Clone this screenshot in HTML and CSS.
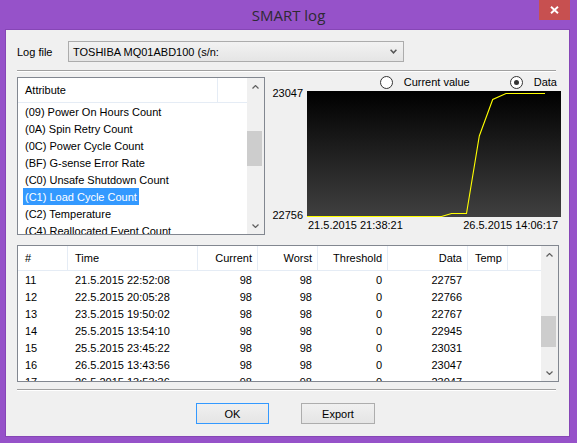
FILE: index.html
```html
<!DOCTYPE html>
<html>
<head>
<meta charset="utf-8">
<title>SMART log</title>
<link rel="stylesheet" href="styles.css">
</head>
<body>
<div class="window">
  <div class="titlebar">
    <div class="title">SMART log</div>
    <div class="close">
      <svg width="9" height="8" viewBox="0 0 9 8"><path d="M1 0.8 L8 7.2 M8 0.8 L1 7.2" stroke="#fff" stroke-width="1.9" fill="none"/></svg>
    </div>
  </div>
  <div class="client">
    <div class="logrow">
      <div class="loglabel">Log file</div>
      <div class="combo">
        <span>TOSHIBA MQ01ABD100 (s/n:</span>
        <svg width="7" height="5" viewBox="0 0 7 5"><path d="M0.6 0.8 L3.5 3.8 L6.4 0.8" fill="none" stroke="#555" stroke-width="1.5"/></svg>
      </div>
    </div>
    <div class="sep"></div>
    <div class="middle">
      <div class="listbox attr">
        <div class="lv-body">
          <div class="lv-head">
            <div class="hcol c-attr">Attribute</div>
          </div>
          <div class="row"><span class="item">(09) Power On Hours Count</span></div>
          <div class="row"><span class="item">(0A) Spin Retry Count</span></div>
          <div class="row"><span class="item">(0C) Power Cycle Count</span></div>
          <div class="row"><span class="item">(BF) G-sense Error Rate</span></div>
          <div class="row"><span class="item">(C0) Unsafe Shutdown Count</span></div>
          <div class="row"><span class="item selected">(C1) Load Cycle Count</span></div>
          <div class="row"><span class="item">(C2) Temperature</span></div>
          <div class="row"><span class="item">(C4) Reallocated Event Count</span></div>
        </div>
        <div class="vscroll">
          <div class="sb-btn"><svg width="7" height="4" viewBox="0 0 7 4"><path d="M0.5 3.5 L3.5 0.6 L6.5 3.5" fill="none" stroke="#606060" stroke-width="1.3"/></svg></div>
          <div class="sb-track"><div class="sb-thumb attr-thumb"></div></div>
          <div class="sb-btn"><svg width="7" height="4" viewBox="0 0 7 4"><path d="M0.5 0.5 L3.5 3.4 L6.5 0.5" fill="none" stroke="#606060" stroke-width="1.3"/></svg></div>
        </div>
      </div>
      <div class="panel">
        <div class="radios">
          <div class="radio"><span class="rcircle"></span><span>Current value</span></div>
          <div class="radio"><span class="rcircle checked"></span><span>Data</span></div>
        </div>
        <div class="plot">
          <div class="ylabel ytop">23047</div>
          <div class="ylabel ybot">22756</div>
          <div class="chart">
            <svg width="254" height="126" viewBox="0 0 254 126">
              <polyline points="0,125.5 134.5,125.5 144.5,122.5 159.5,122.5 172.3,45 185.7,8.5 199,2.5 238,2.5" fill="none" stroke="#ffff00" stroke-width="1.1"/>
            </svg>
          </div>
          <div class="xlabels"><span>21.5.2015 21:38:21</span><span>26.5.2015 14:06:17</span></div>
        </div>
      </div>
    </div>
    <div class="listbox table">
      <div class="lv-body">
        <div class="lv-head">
          <div class="hcol w-num">#</div>
          <div class="hcol w-time">Time</div>
          <div class="hcol w-cur r">Current</div>
          <div class="hcol w-worst r">Worst</div>
          <div class="hcol w-thr r">Threshold</div>
          <div class="hcol w-data r">Data</div>
          <div class="hcol w-temp">Temp</div>
        </div>
        <div class="trow"><span class="cell w-num">11</span><span class="cell w-time">21.5.2015 22:52:08</span><span class="cell w-cur r">98</span><span class="cell w-worst r">98</span><span class="cell w-thr r">0</span><span class="cell w-data r">22757</span><span class="cell w-temp"></span></div>
        <div class="trow"><span class="cell w-num">12</span><span class="cell w-time">22.5.2015 20:05:28</span><span class="cell w-cur r">98</span><span class="cell w-worst r">98</span><span class="cell w-thr r">0</span><span class="cell w-data r">22766</span><span class="cell w-temp"></span></div>
        <div class="trow"><span class="cell w-num">13</span><span class="cell w-time">23.5.2015 19:50:02</span><span class="cell w-cur r">98</span><span class="cell w-worst r">98</span><span class="cell w-thr r">0</span><span class="cell w-data r">22767</span><span class="cell w-temp"></span></div>
        <div class="trow"><span class="cell w-num">14</span><span class="cell w-time">25.5.2015 13:54:10</span><span class="cell w-cur r">98</span><span class="cell w-worst r">98</span><span class="cell w-thr r">0</span><span class="cell w-data r">22945</span><span class="cell w-temp"></span></div>
        <div class="trow"><span class="cell w-num">15</span><span class="cell w-time">25.5.2015 23:45:22</span><span class="cell w-cur r">98</span><span class="cell w-worst r">98</span><span class="cell w-thr r">0</span><span class="cell w-data r">23031</span><span class="cell w-temp"></span></div>
        <div class="trow"><span class="cell w-num">16</span><span class="cell w-time">26.5.2015 13:43:56</span><span class="cell w-cur r">98</span><span class="cell w-worst r">98</span><span class="cell w-thr r">0</span><span class="cell w-data r">23047</span><span class="cell w-temp"></span></div>
        <div class="trow"><span class="cell w-num">17</span><span class="cell w-time">26.5.2015 13:53:36</span><span class="cell w-cur r">98</span><span class="cell w-worst r">98</span><span class="cell w-thr r">0</span><span class="cell w-data r">23047</span><span class="cell w-temp"></span></div>
      </div>
      <div class="vscroll">
        <div class="sb-btn"><svg width="7" height="4" viewBox="0 0 7 4"><path d="M0.5 3.5 L3.5 0.6 L6.5 3.5" fill="none" stroke="#606060" stroke-width="1.3"/></svg></div>
        <div class="sb-track"><div class="sb-thumb table-thumb"></div></div>
        <div class="sb-btn"><svg width="7" height="4" viewBox="0 0 7 4"><path d="M0.5 0.5 L3.5 3.4 L6.5 0.5" fill="none" stroke="#606060" stroke-width="1.3"/></svg></div>
      </div>
    </div>
    <div class="sep sep2"></div>
    <div class="buttons">
      <div class="btn default">OK</div>
      <div class="btn">Export</div>
    </div>
  </div>
</div>
</body>
</html>
```

FILE: styles.css
```css
* { box-sizing: border-box; }

body {
  margin: 0;
  background: #9652c9;
  font-family: "Liberation Sans", Arial, sans-serif;
  font-size: 11px;
  color: #000;
}

.window {
  width: 577px;
  height: 443px;
  display: flex;
  flex-direction: column;
}

.titlebar {
  height: 30px;
  display: grid;
  grid-template-columns: 1fr auto 1fr;
  align-items: start;
}

.title {
  grid-column: 2;
  font-family: "Open Sans", "Noto Sans", sans-serif;
  font-size: 15px;
  line-height: 30px;
  color: #2e2a33;
}

.close {
  grid-column: 3;
  justify-self: end;
  width: 31px;
  height: 20px;
  margin-right: 7px;
  background: #c75050;
  display: flex;
  align-items: center;
  justify-content: center;
}

.close svg { display: block; }

.client {
  margin: 0 8px 7px 6px;
  height: 406px;
  background: #f0f0f0;
  padding: 11px 0 0 11px;
  display: flex;
  flex-direction: column;
  box-shadow: 0 0 0 1px #8646b6;
}

.logrow {
  display: flex;
  align-items: center;
  height: 21px;
}

.loglabel { width: 51px; }

.combo {
  width: 336px;
  height: 21px;
  border: 1px solid #acacac;
  background: linear-gradient(#f2f2f2, #e5e5e5);
  display: flex;
  align-items: center;
  justify-content: space-between;
  padding: 0 6px 0 4px;
}

.combo svg { display: block; }

.sep {
  width: 539px;
  height: 2px;
  border-top: 1px solid #a0a0a0;
  border-bottom: 1px solid #ffffff;
  margin-top: 8px;
}

.middle {
  display: flex;
  height: 158px;
  margin-top: 5px;
}

.listbox {
  border: 1px solid #828790;
  background: #fff;
  display: flex;
}

.listbox.attr {
  width: 248px;
  height: 158px;
}

.lv-body {
  flex: 1;
  min-width: 0;
  overflow: hidden;
}

.lv-head {
  height: 25px;
  border-bottom: 1px solid #e5ecf5;
  display: flex;
}

.hcol {
  height: 24px;
  line-height: 24px;
  border-right: 1px solid #e5ecf5;
  padding: 0 5px 0 7px;
  white-space: nowrap;
  flex: none;
}

.c-attr { width: 200px; }

.row {
  height: 17px;
  padding-top: 1px;
  line-height: 16px;
  white-space: nowrap;
}

.item {
  display: inline-block;
  margin-left: 5px;
  padding: 0 2px;
  margin-top: -1px;
  height: 17px;
  line-height: 18px;
  vertical-align: top;
}

.item.selected {
  background: #3399ff;
  color: #fff;
}

.vscroll {
  width: 17px;
  flex: none;
  background: #f0f0f0;
  display: flex;
  flex-direction: column;
}

.sb-btn {
  height: 17px;
  display: flex;
  align-items: center;
  justify-content: center;
  flex: none;
}

.sb-btn svg { display: block; }

.sb-track { flex: 1; }

.sb-thumb {
  margin: 0 2px 0 0;
  background: #cdcdcd;
}

.attr-thumb { margin-top: 36px; height: 35px; }
.table-thumb { margin-top: 53px; height: 31px; }

.panel {
  width: 291px;
  margin-left: 5px;
  display: flex;
  flex-direction: column;
}

.radios {
  height: 10px;
  display: flex;
  justify-content: flex-end;
  align-items: center;
  padding-right: 4px;
}

.radio {
  display: flex;
  align-items: center;
  gap: 11px;
}

.radio + .radio { margin-left: 40px; }

.rcircle {
  width: 13px;
  height: 13px;
  border: 1px solid #333;
  border-radius: 50%;
  background: #fff;
  flex: none;
  display: flex;
  align-items: center;
  justify-content: center;
}

.rcircle.checked::after {
  content: "";
  width: 5px;
  height: 5px;
  border-radius: 50%;
  background: #333;
}

.plot {
  display: grid;
  grid-template-columns: 37px 254px;
  grid-template-rows: 126px 13px;
  margin-top: 4px;
}

.ylabel {
  grid-column: 1;
  grid-row: 1;
  text-align: right;
  padding-right: 4px;
  line-height: 13px;
}

.ytop { align-self: start; margin-top: -4px; }
.ybot { align-self: end; margin-bottom: -5px; }

.chart {
  grid-column: 2;
  grid-row: 1;
  background: linear-gradient(#000000, #404040);
}

.chart svg { display: block; }

.xlabels {
  grid-column: 2;
  grid-row: 2;
  display: flex;
  justify-content: space-between;
  line-height: 13px;
  margin-top: 2px;
  padding: 0 3px 0 1px;
}

.listbox.table {
  width: 542px;
  height: 137px;
  margin-top: 10px;
}

.trow {
  height: 17px;
  padding-top: 1px;
  line-height: 17px;
  display: flex;
  white-space: nowrap;
}

.cell {
  flex: none;
  padding: 0 6px 0 7px;
}

.r { text-align: right; }

.w-num { width: 50px; }
.w-time { width: 130px; }
.w-cur { width: 60px; }
.w-worst { width: 60px; }
.w-thr { width: 70px; }
.w-data { width: 80px; }
.w-temp { width: 40px; }

.sep2 { margin-top: 7px; }

.buttons {
  display: flex;
  gap: 32px;
  margin-top: 12px;
  padding-left: 179px;
}

.btn {
  width: 73px;
  height: 21px;
  border: 1px solid #adadad;
  background: linear-gradient(#f0f0f0, #e5e5e5);
  display: flex;
  align-items: center;
  justify-content: center;
}

.btn + .btn { width: 74px; }

.btn.default { border-color: #3399ff; }
```
